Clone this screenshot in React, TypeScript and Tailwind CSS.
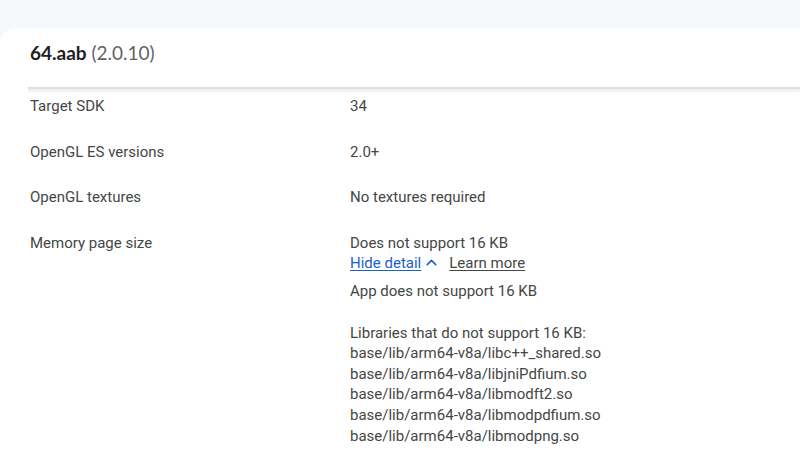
import { ChevronUp } from "lucide-react";

const rows: { label: string; value: string }[] = [
  { label: "Target SDK", value: "34" },
  { label: "OpenGL ES versions", value: "2.0+" },
  { label: "OpenGL textures", value: "No textures required" },
];

const libraries = [
  "base/lib/arm64-v8a/libc++_shared.so",
  "base/lib/arm64-v8a/libjniPdfium.so",
  "base/lib/arm64-v8a/libmodft2.so",
  "base/lib/arm64-v8a/libmodpdfium.so",
  "base/lib/arm64-v8a/libmodpng.so",
  "base/lib/arm64-v8a/libmodpdfium2.so",
];

export default function App() {
  return (
    <div
      className="h-[450px] w-[800px] overflow-hidden bg-[#f5f9fc] pt-[28px]"
      style={{ fontFamily: "Roboto, 'Noto Sans', sans-serif" }}
    >
      <div className="h-full rounded-tl-[16px] bg-white">
        <div className="flex h-[59px] items-center px-[30px] pb-[9px]">
          <h1
            className="text-[19px] leading-[24px] text-[#1f1f1f]"
            style={{ fontFamily: "Lato, Inter, sans-serif" }}
          >
            <span className="font-bold">64.aab</span>{" "}
            <span className="text-[#5f6368]">(2.0.10)</span>
          </h1>
        </div>
        <div className="ml-[28px] h-[2px] bg-[#dedfe1] shadow-[0_2px_3px_rgba(0,0,0,0.12)]" />

        <div className="grid grid-cols-[320px_1fr] gap-y-[25px] px-[30px] pt-[7px] text-[15px] leading-[20.6px] text-[#444746]">
          {rows.map((r) => (
            <div key={r.label} className="contents">
              <div>{r.label}</div>
              <div>{r.value}</div>
            </div>
          ))}
          <div>Memory page size</div>
          <div>
            <div>Does not support 16 KB</div>
            <div className="-mt-[1px] flex h-[21px] items-center gap-[9px]">
              <span className="flex items-center gap-[2px] text-[#1a5fd0]">
                <span className="underline underline-offset-2">Hide detail</span>
                <ChevronUp size={17} strokeWidth={2.2} />
              </span>
              <span className="underline underline-offset-2">Learn more</span>
            </div>
            <div className="mt-[8px]">App does not support 16 KB</div>
            <div className="mt-[20.6px]">Libraries that do not support 16 KB:</div>
            {libraries.map((l) => (
              <div key={l}>{l}</div>
            ))}
          </div>
        </div>
      </div>
    </div>
  );
}
